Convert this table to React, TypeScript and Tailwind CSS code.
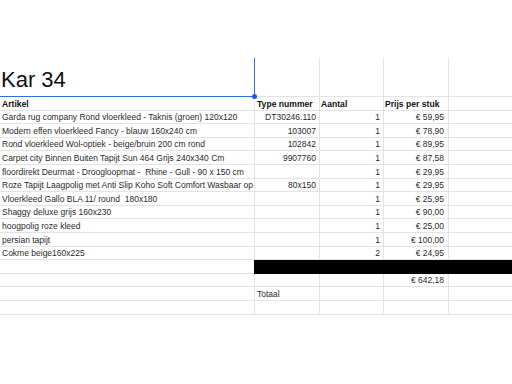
import React from "react";

type Row = [string, string, string, string];

const items: Row[] = [
  ["Garda rug company Rond vloerkleed - Taknis (groen) 120x120", "DT30246.110", "1", "€ 59,95"],
  ["Modern effen vloerkleed Fancy - blauw 160x240 cm", "103007", "1", "€ 78,90"],
  ["Rond vloerkleed Wol-optiek - beige/bruin 200 cm rond", "102842", "1", "€ 89,95"],
  ["Carpet city Binnen Buiten Tapijt Sun 464 Grijs 240x340 Cm", "9907760", "1", "€ 87,58"],
  ["floordirekt Deurmat - Droogloopmat -  Rhine - Gull - 90 x 150 cm", "", "1", "€ 29,95"],
  ["Roze Tapijt Laagpolig met Anti Slip Koho Soft Comfort Wasbaar op", "80x150", "1", "€ 29,95"],
  ["Vloerkleed Gallo BLA 11/ round  180x180", "", "1", "€ 25,95"],
  ["Shaggy deluxe grijs 160x230", "", "1", "€ 90,00"],
  ["hoogpolig roze kleed", "", "1", "€ 25,00"],
  ["persian tapijt", "", "1", "€ 100,00"],
  ["Cokme beige160x225", "", "2", "€ 24,95"],
];

const cell =
  "h-full flex items-end border-r border-b border-[#e2e3e3] overflow-hidden whitespace-pre leading-[9px] pb-[1px]";

function DataRow({ r, bold }: { r: Row; bold?: boolean }) {
  const fw = bold ? "font-bold text-[#111] text-[8.6px]" : "text-[#2a2a2a] text-[8.5px]";
  return (
    <div className={`flex h-[13.6px] ${fw}`}>
      <div className={`${cell} w-[255px] pl-[2px]`}>{r[0]}</div>
      <div className={`${cell} w-[65px] ${bold ? "pl-[2px]" : "justify-end pr-[3px]"}`}>{r[1]}</div>
      <div className={`${cell} w-[64px] ${bold ? "pl-[1px]" : "justify-end pr-[3px]"}`}>{r[2]}</div>
      <div className={`${cell} w-[65px] ${bold ? "pl-[1px]" : "justify-end pr-[4px]"}`}>{r[3]}</div>
      <div className="h-full flex-1 border-b border-[#e2e3e3]" />
    </div>
  );
}

export default function App() {
  return (
    <div
      className="w-[512px] h-[384px] bg-white overflow-hidden pt-[58px]"
      style={{ fontFamily: '"Liberation Sans", Arial, sans-serif' }}
    >
      <div className="relative">
        {/* title row */}
        <div className="flex h-[39px]">
          <div className="h-full w-[255px] flex items-end border-r border-b border-[#2f6fd6] pl-[1px] pb-[3px] text-[22px] leading-[26px] text-[#111]">
            Kar 34
          </div>
          <div className="h-full w-[65px] border-r border-b border-[#e2e3e3]" />
          <div className="h-full w-[64px] border-r border-b border-[#e2e3e3]" />
          <div className="h-full w-[65px] border-r border-b border-[#e2e3e3]" />
          <div className="h-full flex-1 border-b border-[#e2e3e3]" />
        </div>
        <div className="absolute left-[252px] top-[36px] w-[5px] h-[5px] rounded-full bg-[#1a5fd0]" />

        <DataRow r={["Artikel", "Type nummer", "Aantal", "Prijs per stuk"]} bold />
        {items.map((r, i) => (
          <DataRow key={i} r={r} />
        ))}

        {/* black band */}
        <div className="flex h-[13.6px]">
          <div className="h-full w-[254px] border-b border-[#e2e3e3]" />
          <div className="h-full flex-1 bg-black" />
        </div>

        <DataRow r={["", "", "", "€ 642,18"]} />
        <div className="flex h-[13.6px] text-[8.5px] text-[#2a2a2a]">
          <div className={`${cell} w-[255px] pl-[2px]`}></div>
          <div className={`${cell} w-[65px] pl-[2px]`}>Totaal</div>
          <div className={`${cell} w-[64px]`}></div>
          <div className={`${cell} w-[65px]`}></div>
          <div className="h-full flex-1 border-b border-[#e2e3e3]" />
        </div>
        <DataRow r={["", "", "", ""]} />
      </div>
    </div>
  );
}
